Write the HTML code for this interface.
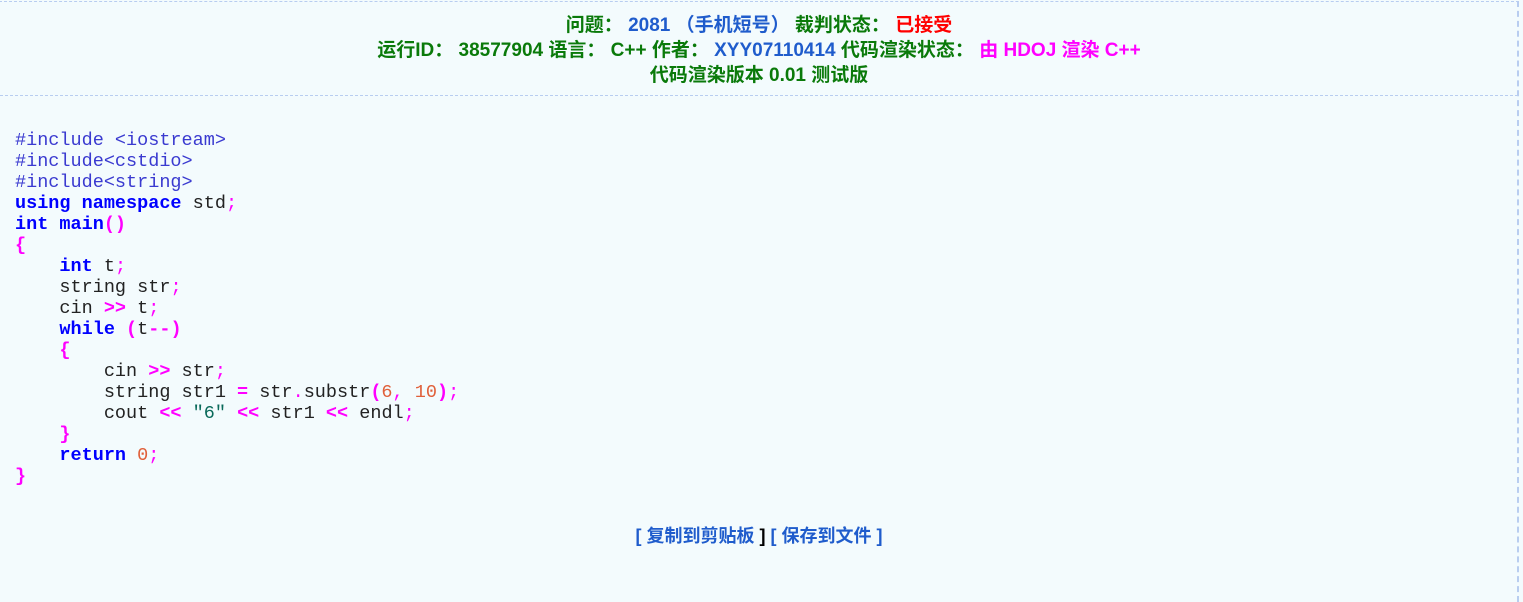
<!DOCTYPE html>
<html><head><meta charset="utf-8"><style>
html,body{margin:0;padding:0;width:1523px;height:567px;overflow:hidden;background:#f3fbfd;}
.box{position:absolute;left:-1px;top:1px;width:1518px;height:600px;border-top:1px dashed #b8cdf0;border-right:2px dashed #b8cdf0;}
.hdr{position:absolute;left:0;top:13px;width:1518px;text-align:center;font:bold 19px/25px "Liberation Sans","Noto Sans CJK SC",sans-serif;color:#0a7a0a;}
.sep{position:absolute;left:0;top:95px;width:1518px;border-top:1px dashed #b8cdf0;}
.b{color:#1f5ccc}.r{color:#ff0000}.m{color:#ff00ff}
pre{position:absolute;left:15px;top:130px;margin:0;font:18.5px/21px "Liberation Mono",monospace;color:#222;}
.pp{color:#3a3ad0}.kw{color:#0000ff;font-weight:bold}.op{color:#ff00ff;font-weight:bold}.sc{color:#ff00ff}.n{color:#e0603a}.s{color:#0a6a5a}
.btns{position:absolute;left:0;top:524px;width:1518px;text-align:center;font:bold 18px/24px "Liberation Sans","Noto Sans CJK SC",sans-serif;color:#1f5ccc;}
.btns .k{color:#000}
</style></head><body>
<div class="box"></div>
<div class="hdr">
<div>问题： <span class="b">2081 （手机短号）</span> 裁判状态： <span class="r">已接受</span></div>
<div>运行ID： 38577904 语言： C++ 作者： <span class="b">XYY07110414</span> 代码渲染状态： <span class="m">由 HDOJ 渲染 C++</span></div>
<div>代码渲染版本 0.01 测试版</div>
</div>
<div class="sep"></div>
<pre><span class="pp">#include &lt;iostream&gt;</span>
<span class="pp">#include&lt;cstdio&gt;</span>
<span class="pp">#include&lt;string&gt;</span>
<span class="kw">using namespace</span> std<span class="sc">;</span>
<span class="kw">int main</span><span class="op">()</span>
<span class="op">{</span>
    <span class="kw">int</span> t<span class="sc">;</span>
    string str<span class="sc">;</span>
    cin <span class="op">&gt;&gt;</span> t<span class="sc">;</span>
    <span class="kw">while</span> <span class="op">(</span>t<span class="op">--)</span>
    <span class="op">{</span>
        cin <span class="op">&gt;&gt;</span> str<span class="sc">;</span>
        string str1 <span class="op">=</span> str<span class="sc">.</span>substr<span class="op">(</span><span class="n">6</span><span class="sc">,</span> <span class="n">10</span><span class="op">)</span><span class="sc">;</span>
        cout <span class="op">&lt;&lt;</span> <span class="s">"6"</span> <span class="op">&lt;&lt;</span> str1 <span class="op">&lt;&lt;</span> endl<span class="sc">;</span>
    <span class="op">}</span>
    <span class="kw">return</span> <span class="n">0</span><span class="sc">;</span>
<span class="op">}</span></pre>
<div class="btns">[ 复制到剪贴板 <span class="k">]</span> [ 保存到文件 ]</div>
</body></html>
